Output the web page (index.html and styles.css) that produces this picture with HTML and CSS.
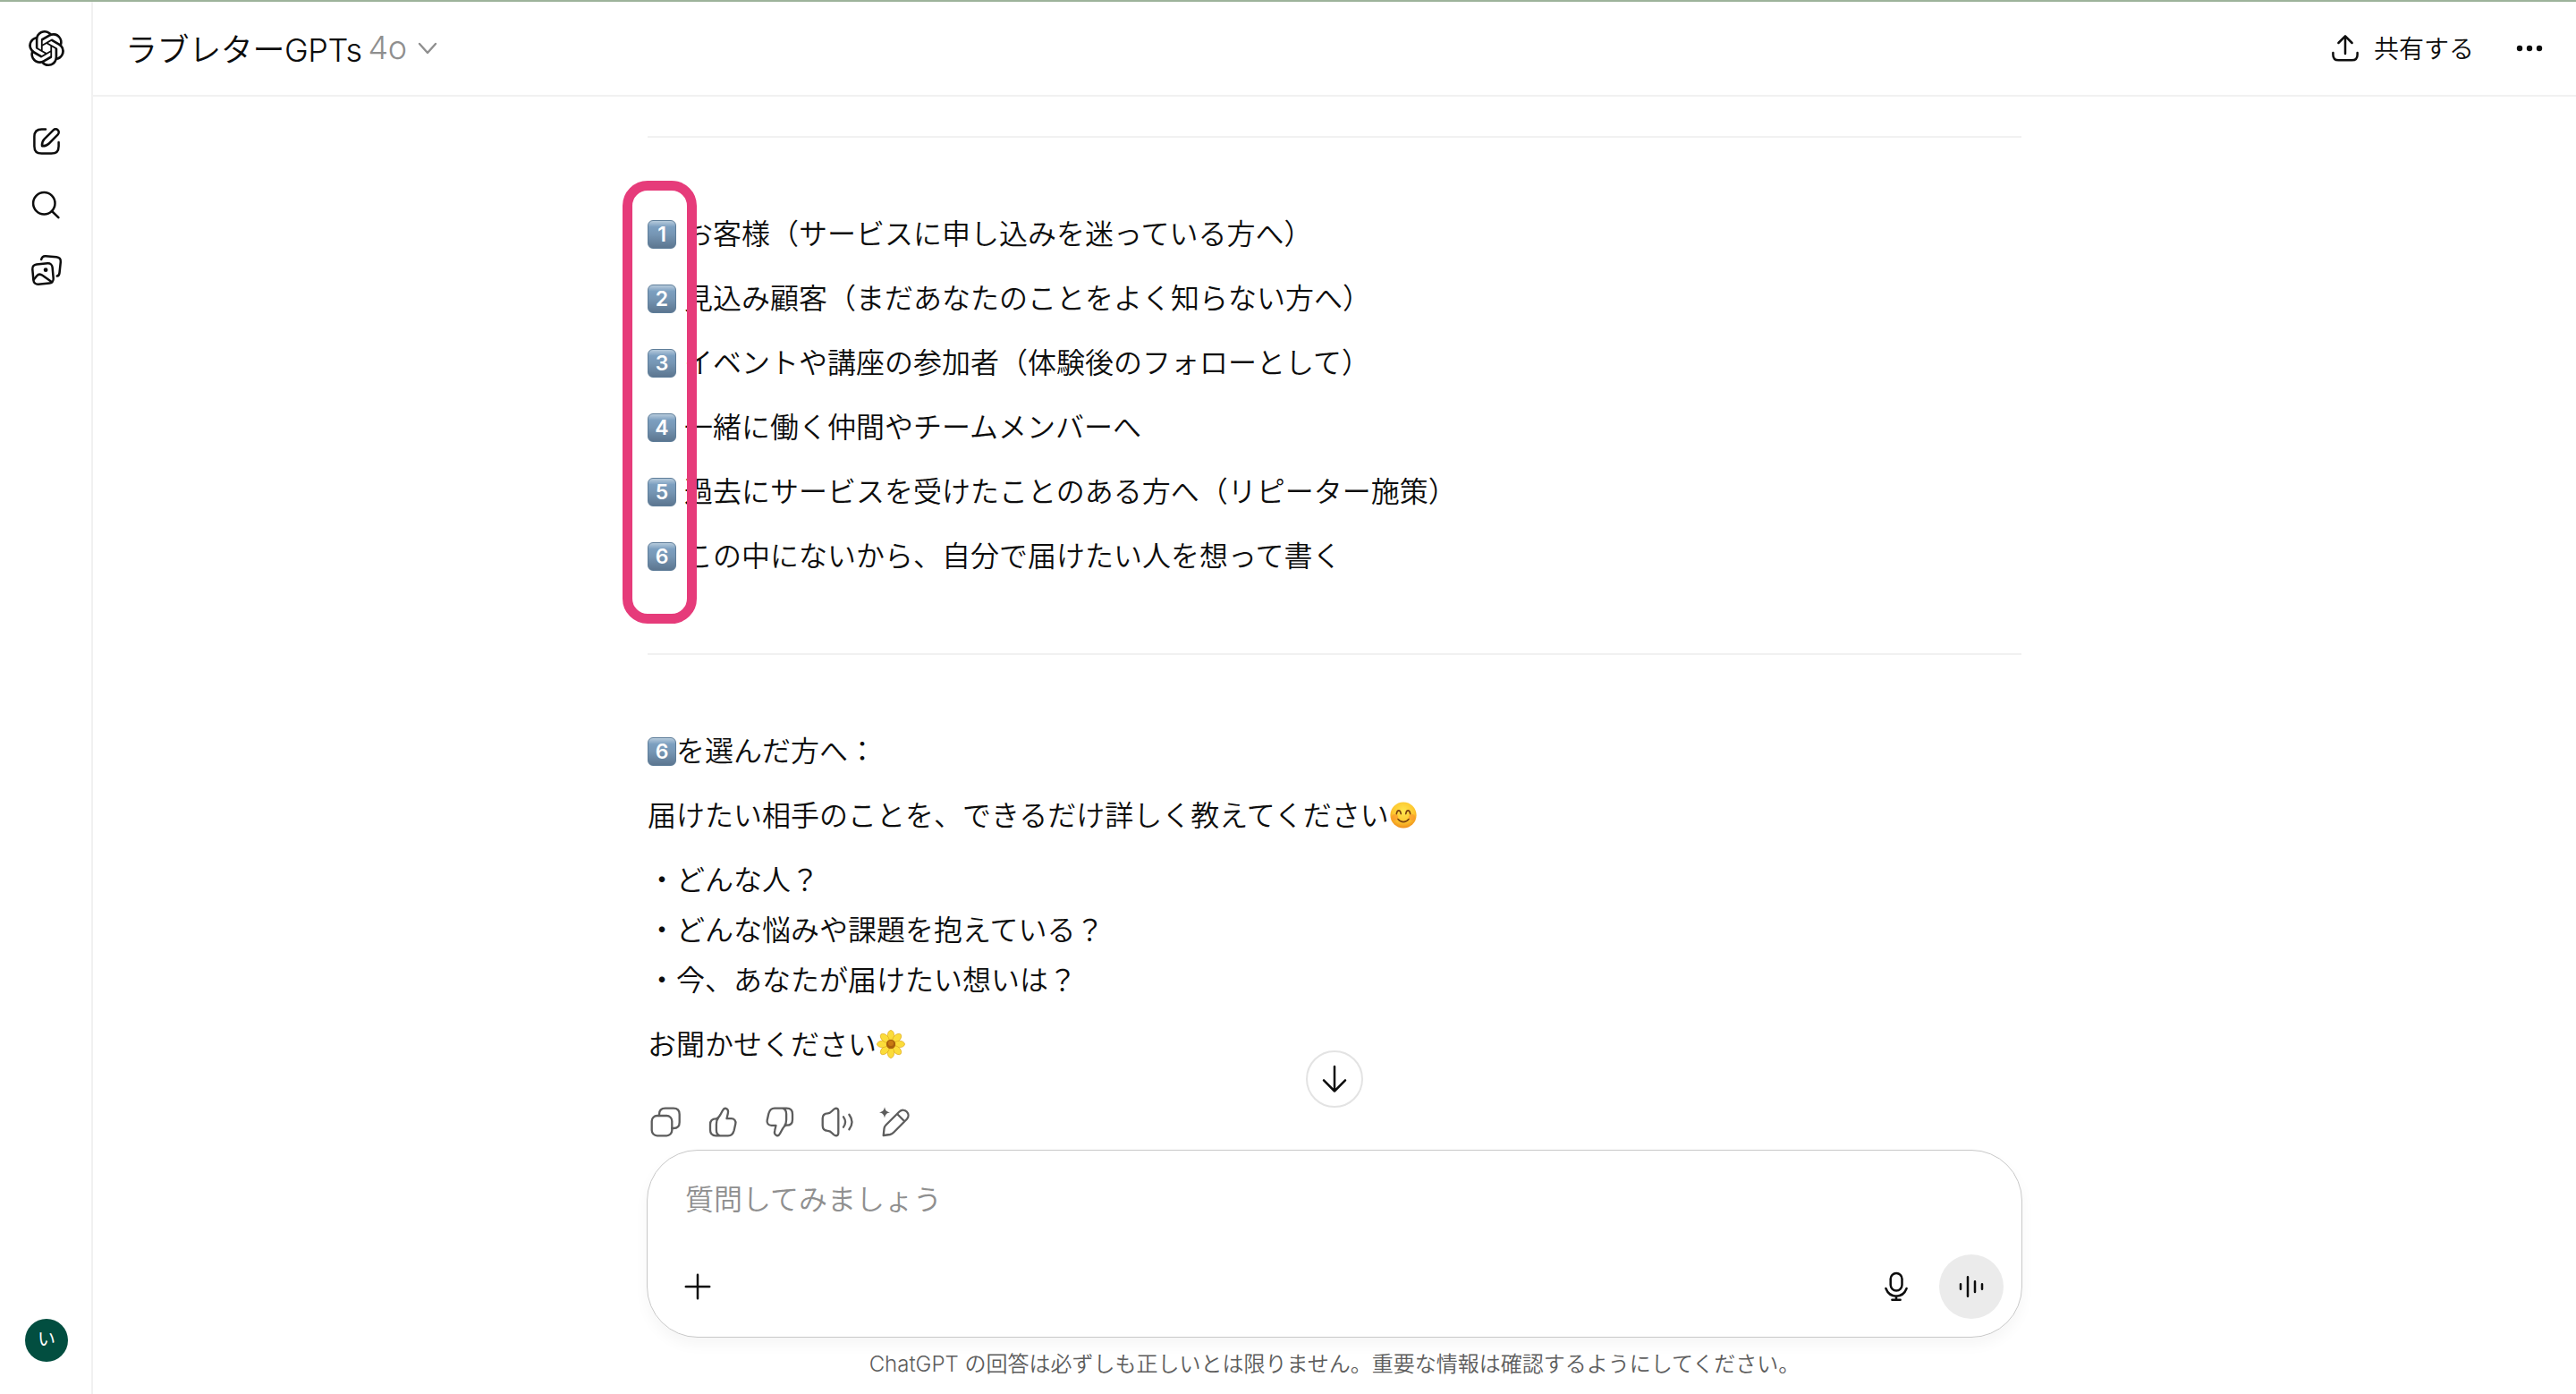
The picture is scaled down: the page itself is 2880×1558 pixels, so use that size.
FILE: index.html
```html
<!DOCTYPE html>
<html lang="ja">
<head>
    <meta charset="UTF-8">
    <title>ラブレターGPTs</title>
    <link rel="stylesheet" href="styles.css">
</head>
<body>
    <aside class="sidebar">
        <a class="logo" href="#"><svg width="40" height="40" viewBox="0 0 24 24" fill="currentColor"><path d="M22.2819 9.8211a5.9847 5.9847 0 0 0-.5157-4.9108 6.0462 6.0462 0 0 0-6.5098-2.9A6.0651 6.0651 0 0 0 4.9807 4.1818a5.9847 5.9847 0 0 0-3.9977 2.9 6.0462 6.0462 0 0 0 .7427 7.0966 5.98 5.98 0 0 0 .511 4.9107 6.051 6.051 0 0 0 6.5146 2.9001A5.9847 5.9847 0 0 0 13.2599 24a6.0557 6.0557 0 0 0 5.7718-4.2058 5.9894 5.9894 0 0 0 3.9977-2.9001 6.0557 6.0557 0 0 0-.7475-7.0729zm-9.022 12.6081a4.4755 4.4755 0 0 1-2.8764-1.0408l.1419-.0804 4.7783-2.7582a.7948.7948 0 0 0 .3927-.6813v-6.7369l2.02 1.1686a.071.071 0 0 1 .038.052v5.5826a4.504 4.504 0 0 1-4.4945 4.4944zm-9.6607-4.1254a4.4708 4.4708 0 0 1-.5346-3.0137l.142.0852 4.783 2.7582a.7712.7712 0 0 0 .7806 0l5.8428-3.3685v2.3324a.0804.0804 0 0 1-.0332.0615L9.74 19.9502a4.4992 4.4992 0 0 1-6.1408-1.6464zM2.3408 7.8956a4.485 4.485 0 0 1 2.3655-1.9728V11.6a.7664.7664 0 0 0 .3879.6765l5.8144 3.3543-2.0201 1.1685a.0757.0757 0 0 1-.071 0l-4.8303-2.7865A4.504 4.504 0 0 1 2.3408 7.872zm16.5963 3.8558L13.1038 8.364 15.1192 7.2a.0757.0757 0 0 1 .071 0l4.8303 2.7913a4.4944 4.4944 0 0 1-.6765 8.1042v-5.6772a.79.79 0 0 0-.407-.667zm2.0107-3.0231l-.142-.0852-4.7735-2.7818a.7759.7759 0 0 0-.7854 0L9.409 9.2297V6.8974a.0662.0662 0 0 1 .0284-.0615l4.8303-2.7866a4.4992 4.4992 0 0 1 6.6802 4.66zM8.3065 12.863l-2.02-1.1638a.0804.0804 0 0 1-.038-.0567V6.0742a4.4992 4.4992 0 0 1 7.3757-3.4537l-.142.0805L8.704 5.459a.7948.7948 0 0 0-.3927.6813zm1.0976-2.3654l2.602-1.4998 2.6069 1.4998v2.9994l-2.5974 1.4997-2.6067-1.4997Z"/></svg></a>
        <nav class="side-nav">
            <a href="#"><svg class="icon" viewBox="0 0 40 40"><path d="M19 6.4h-4.4c-5.2 0-8.2 3-8.2 8.2v10.8c0 5.2 3 8.2 8.2 8.2h10.8c5.2 0 8.2-3 8.2-8.2V21"/><path d="M15 25.2c-.3-4 .4-5.6 2.6-7.8L27.7 7.3a3.5 3.5 0 0 1 5 5L22.7 22.5c-2.3 2.3-3.8 2.9-7.7 2.7z"/></svg></a>
            <a href="#"><svg class="icon" viewBox="0 0 40 40"><circle cx="17.3" cy="17.3" r="12.2"/><path d="M26 26l7.4 7.2"/></svg></a>
            <a href="#"><svg class="icon" viewBox="0 0 40 40"><rect x="4.8" y="12.8" width="22.4" height="22.4" rx="5" transform="rotate(-5 16 24)"/><circle class="solid" cx="19.1" cy="19.7" r="2.4"/><path d="M6 30.3l3-3.8c2-2.4 4.3-2.4 6.5-.7l10.5 7.4"/><path d="M14.2 8c.6-2.7 2.2-4 4.8-3.8l12 1c3.4.3 5.2 2.3 4.8 5.6l-1.3 12.2c-.2 2-1 3.3-2.8 3.6"/></svg></a>
        </nav>
        <div class="avatar">い</div>
    </aside>

    <div class="page">
        <header class="topbar">
            <div class="model">
                <span>ラブレターGPTs</span>
                <span class="version">4o</span>
                <svg class="chevron" viewBox="0 0 24 24"><path d="M3 7l9 10 9-10"/></svg>
            </div>
            <div class="topbar-actions">
                <svg class="icon" viewBox="0 0 40 40"><path d="M20 26V6.4M12.4 14L20 6.4l7.6 7.6M6.4 25v2.2c0 4.2 2 6.1 6.2 6.1h14.8c4.2 0 6.2-1.9 6.2-6.1V25"/></svg>
                <span class="share">共有する</span>
                <svg class="icon dots" viewBox="0 0 40 40"><circle cx="9" cy="20" r="3.2"/><circle cx="20" cy="20" r="3.2"/><circle cx="31" cy="20" r="3.2"/></svg>
            </div>
        </header>

        <main class="thread">
            <hr>
            <div class="choices">
                <p><span class="keycap">1</span> お客様（サービスに申し込みを迷っている方へ）</p>
                <p><span class="keycap">2</span> 見込み顧客（まだあなたのことをよく知らない方へ）</p>
                <p><span class="keycap">3</span> イベントや講座の参加者（体験後のフォローとして）</p>
                <p><span class="keycap">4</span> 一緒に働く仲間やチームメンバーへ</p>
                <p><span class="keycap">5</span> 過去にサービスを受けたことのある方へ（リピーター施策）</p>
                <p><span class="keycap">6</span> この中にないから、自分で届けたい人を想って書く</p>
                <div class="marker"></div>
            </div>
            <hr>
            <div class="details">
                <p><span class="keycap">6</span>を選んだ方へ：</p>
                <p>届けたい相手のことを、できるだけ詳しく教えてください<svg class="emoji" viewBox="0 0 32 32">
                    <defs><radialGradient id="face" cx=".5" cy=".35" r=".65"><stop offset="0" stop-color="#ffe64f"/><stop offset=".65" stop-color="#fdc62f"/><stop offset="1" stop-color="#ef8e1b"/></radialGradient></defs>
                    <circle cx="16" cy="16" r="14.6" fill="url(#face)"/>
                    <circle cx="6.5" cy="18.5" r="3.6" fill="#f98a2c" opacity=".55"/><circle cx="25.5" cy="18.5" r="3.6" fill="#f98a2c" opacity=".55"/>
                    <path d="M8.3 14.6c.8-5 4.2-5 5 0M18.7 14.6c.8-5 4.2-5 5 0M10 20.5c3.2 4.2 8.8 4.2 12 0" fill="none" stroke="#7b4210" stroke-width="1.6" stroke-linecap="round"/>
                </svg></p>
                <p>・どんな人？<br>・どんな悩みや課題を抱えている？<br>・今、あなたが届けたい想いは？</p>
                <p>お聞かせください<svg class="emoji" viewBox="0 0 32 32">
                    <g fill="#fbdc3a" stroke="#dfa818" stroke-width=".7">
                        <ellipse cx="16" cy="6.5" rx="3.7" ry="6"/>
                        <ellipse cx="16" cy="6.5" rx="3.7" ry="6" transform="rotate(45 16 16)"/>
                        <ellipse cx="16" cy="6.5" rx="3.7" ry="6" transform="rotate(90 16 16)"/>
                        <ellipse cx="16" cy="6.5" rx="3.7" ry="6" transform="rotate(135 16 16)"/>
                        <ellipse cx="16" cy="6.5" rx="3.7" ry="6" transform="rotate(180 16 16)"/>
                        <ellipse cx="16" cy="6.5" rx="3.7" ry="6" transform="rotate(225 16 16)"/>
                        <ellipse cx="16" cy="6.5" rx="3.7" ry="6" transform="rotate(270 16 16)"/>
                        <ellipse cx="16" cy="6.5" rx="3.7" ry="6" transform="rotate(315 16 16)"/>
                    </g>
                    <circle cx="16" cy="16" r="5.2" fill="#a9600c"/><circle cx="16" cy="15" r="3" fill="#c87912"/>
                </svg></p>
            </div>
            <div class="actions">
                <svg class="icon" viewBox="0 0 40 40"><rect x="4.7" y="13" width="22.6" height="22.3" rx="6"/><path d="M13 13v-1.5c0-4.5 2.3-6.8 6.8-6.8h9.1c4.5 0 6.8 2.3 6.8 6.8v8.7c0 4.5-2.3 6.8-6.8 6.8h-1.6"/></svg>
                <svg class="icon" viewBox="0 0 40 40"><path id="thumb" d="M26 35.3H12.5C8.3 35.3 6 33 6 28.8v-6c0-4.3 2.3-6.5 6.5-6.5 2.5 0 3.8-2.6 5.2-5.1L20 7c1.1-2.1 2.3-2.6 3.6-2.1 2.5 1 2.8 3.2 2.2 5.5l-1.3 5.8h5c3.5 0 5.5 2.6 4.8 5.8l-1.6 7.2c-1.1 4.3-2.7 6.1-6.7 6.1zM17 35.3c-3-.8-4.1-2.8-4.1-6.3v-6.5c0-3 .4-5 2-6.7"/></svg>
                <svg class="icon" viewBox="0 0 40 40"><use href="#thumb" transform="rotate(180 20 20)"/></svg>
                <svg class="icon" viewBox="0 0 40 40"><path d="M9.5 10.3c3 0 4-1.8 6.5-4.3 2.5-2.2 5.3-1.5 5.3 2v24c0 3.5-2.8 4.2-5.3 2-2.5-2.5-3.5-4.1-6.5-4.1-4-.2-5.8-1.9-5.8-5.9v-8c0-4 1.8-5.6 5.8-5.7zM27 14.3c2.6 3.6 2.6 7.8 0 11.4M33.4 11.7c3.9 5.2 3.9 11.4 0 16.6"/></svg>
                <svg class="icon" viewBox="0 0 40 40"><path d="M7.7 35l.8-7.7c.2-1.7.9-2.8 2.1-4L25.4 8.5c6-5.3 13.5 2.7 8.5 8.3L19 31.7c-1.2 1.2-2.2 2-4 2.3zM23.8 11.7l7 7"/><path class="solid" d="M9 3.2c1 4 2 5 6 6.1-4 1-5 2-6 6.1-1-4-2-5-6-6.1 4-1 5-2 6-6.1z"/></svg>
            </div>
        </main>

        <button class="scroll-down"><svg class="icon" viewBox="0 0 40 40"><path d="M20 6v27.5M8 21.3l12 12.2 12-12.2"/></svg></button>

        <div class="composer">
            <div class="placeholder">質問してみましょう</div>
            <div class="composer-tools">
                <svg class="icon plus" viewBox="0 0 40 40"><path d="M20 6.8v26.4M6.8 20h26.4"/></svg>
                <svg class="icon mic" viewBox="0 0 40 40"><rect x="13.7" y="4.9" width="12.8" height="19.6" rx="6.4"/><path d="M8.4 22c4.4 11.5 18.8 11.5 23.2 0M20 30.6v4.2M15.4 34.8h9.2"/></svg>
                <button class="voice"><svg class="icon" viewBox="0 0 40 40"><path d="M8 17.3v5.4M16 9.2v21.6M24 14.3v11.6M32 17.3v5.4"/></svg></button>
            </div>
        </div>
        <footer>ChatGPT の回答は必ずしも正しいとは限りません。重要な情報は確認するようにしてください。</footer>
    </div>
</body>
</html>
```
FILE: styles.css
```css
* {
    box-sizing: border-box;
}
body {
    display: flex;
    height: 1558px;
    margin: 0;
    border-top: 2px solid #9db39b;
    background: #fff;
    color: #0d0d0d;
    font-family: Inter, "Noto Sans CJK JP", sans-serif;
    font-weight: 350;
    overflow: hidden;
}
p, hr {
    margin: 0;
}
button {
    padding: 0;
    border: 0;
}
.icon {
    display: block;
    flex: none;
    width: 40px;
    height: 40px;
    fill: none;
    stroke: currentColor;
    stroke-width: 2.5;
    stroke-linecap: round;
    stroke-linejoin: round;
}
.icon .solid, .dots {
    fill: currentColor;
    stroke: none;
}

/* Sidebar */
.sidebar {
    display: flex;
    flex-direction: column;
    align-items: center;
    width: 104px;
    padding: 32px 0 36px;
    border-right: 2px solid #f1f1f1;
}
.sidebar a {
    display: block;
    color: inherit;
}
.logo {
    height: 40px;
    margin-left: 2px;
}
.side-nav {
    display: flex;
    flex-direction: column;
    gap: 32px;
    margin: 64px 0 auto 2px;
}
.avatar {
    width: 48px;
    height: 48px;
    margin-left: 2px;
    border-radius: 50%;
    background: #024e40;
    color: #fff;
    font-size: 20px;
    font-weight: 400;
    line-height: 47px;
    text-align: center;
}

/* Header */
.page {
    display: flex;
    flex: 1;
    flex-direction: column;
    align-items: center;
    position: relative;
}
.topbar {
    display: flex;
    flex: none;
    align-items: center;
    justify-content: space-between;
    width: 100%;
    height: 106px;
    padding: 0 32px 0 36px;
    border-bottom: 2px solid #f1f1f1;
}
.model {
    display: flex;
    align-items: center;
    font-size: 36px;
    letter-spacing: -0.4px;
}
.model span, .share {
    padding-bottom: 3px;
}
.version {
    margin-left: 7px;
    color: #8f8f8f;
}
.chevron {
    width: 24px;
    height: 24px;
    margin-left: 11px;
    fill: none;
    stroke: #8f8f8f;
    stroke-width: 2.4;
    stroke-linecap: round;
    stroke-linejoin: round;
}
.topbar-actions {
    display: flex;
    align-items: center;
}
.share {
    margin: 0 42px 0 12px;
    font-size: 28px;
}

/* Conversation */
.thread {
    width: 1536px;
    height: 1177px;
    padding-top: 44px;
    font-size: 32px;
    line-height: 56px;
}
hr {
    height: 2px;
    border: 0;
    background: #f1f1f1;
}
.choices, .details {
    display: flex;
    flex-direction: column;
    gap: 16px;
    position: relative;
    padding: 80px 0;
}
.choices p, .details p:not(:nth-child(3)) {
    height: 56px;
}
.details {
    padding-bottom: 38px;
}
.keycap {
    display: inline-block;
    width: 32px;
    height: 32px;
    border: 1px solid #5e7d99;
    border-radius: 6px;
    background: linear-gradient(#b7cbdc, #7c9fc0 22%, #7696b4 50%, #5c7690);
    color: #fff;
    font-family: Inter, sans-serif;
    font-size: 23px;
    font-weight: 600;
    line-height: 30px;
    text-align: center;
    vertical-align: 3px;
}
.emoji {
    width: 32px;
    height: 32px;
    vertical-align: -4px;
}
.marker {
    position: absolute;
    top: 48px;
    left: -28px;
    width: 83px;
    height: 495px;
    border: 11px solid #e63b7a;
    border-radius: 28px;
}
.actions {
    display: flex;
    gap: 24px;
    color: #5d5d5d;
}
.actions .icon {
    stroke-width: 2.3;
}
.scroll-down {
    display: flex;
    align-items: center;
    justify-content: center;
    position: absolute;
    top: 1172px;
    left: 1356px;
    width: 64px;
    height: 64px;
    border: 2px solid #e3e3e3;
    border-radius: 50%;
    background: #fff;
    color: #0d0d0d;
}

/* Message box */
.composer {
    display: flex;
    flex: none;
    flex-direction: column;
    justify-content: space-between;
    width: 1538px;
    height: 210px;
    padding: 27px 20px 20px 42px;
    border: 1px solid #c8c8c8;
    border-radius: 57px;
    box-shadow: 0 8px 16px rgba(0, 0, 0, 0.04);
}
.placeholder {
    color: #8f8f8f;
    font-size: 32px;
    line-height: 56px;
}
.composer-tools {
    display: flex;
    align-items: center;
}
.plus {
    margin: 0 auto 0 -6px;
}
.mic {
    margin-right: 28px;
}
.voice {
    display: flex;
    align-items: center;
    justify-content: center;
    width: 72px;
    height: 72px;
    border-radius: 50%;
    background: #ebebeb;
    color: #0d0d0d;
}
footer {
    margin-top: 12px;
    color: #5d5d5d;
    font-size: 24px;
    line-height: 36px;
}
```
